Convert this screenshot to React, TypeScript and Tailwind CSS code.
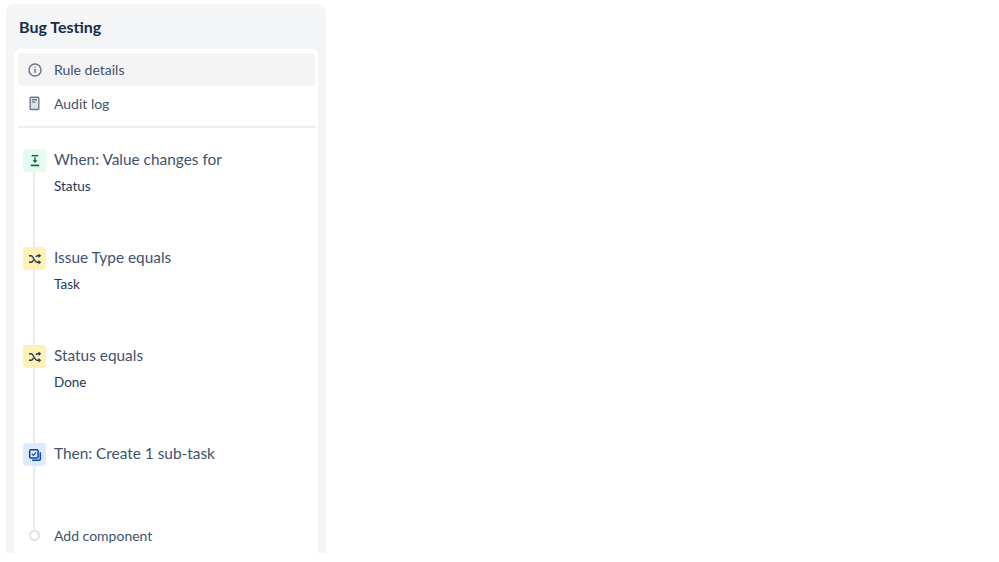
const FONT = "font-['Lato','Noto_Sans',sans-serif]";

function InfoIcon() {
  return (
    <svg width="16" height="16" viewBox="0 0 16 16" fill="none">
      <circle cx="8" cy="8" r="6" stroke="#6b778c" strokeWidth="1.5" />
      <rect x="7.25" y="7" width="1.5" height="4" fill="#6b778c" />
      <rect x="7.25" y="4.6" width="1.5" height="1.5" rx="0.75" fill="#6b778c" />
    </svg>
  );
}

function PageIcon() {
  return (
    <svg width="16" height="16" viewBox="0 0 16 16" fill="none">
      <rect x="3.2" y="1.2" width="8.6" height="12.3" rx="1" stroke="#6b778c" strokeWidth="1.4" fill="#dfe1e6" />
      <rect x="5" y="3" width="5" height="1.4" fill="#6b778c" />
      <rect x="5" y="5.400" width="3.4" height="1.3" fill="#6b778c" />
    </svg>
  );
}

function TriggerIcon() {
  return (
    <svg width="16" height="16" viewBox="0 0 16 16" fill="none">
      <rect x="4.700" y="2" width="6.600" height="1.400" fill="#006644" />
      <rect x="3.800" y="11.600" width="8.400" height="1.600" fill="#006644" />
      <path d="M7.300 4.200h1.400v3h1.800L8 10 5.500 7.200h1.800z" fill="#006644" />
    </svg>
  );
}

function ShuffleIcon() {
  return (
    <svg width="16" height="16" viewBox="0 0 16 16" fill="none">
      <path d="M2 4.800h2.200c2.400 0 3.200 6.400 5.600 6.400H12M2 11.200h2.200c1 0 1.700-1 2.300-2.200M9 6c.3-.7.7-1.200 1.400-1.200H12" stroke="#253858" strokeWidth="1.500" />
      <path d="M11.500 2.600 14.300 4.800 11.500 7zM11.500 9 14.300 11.200 11.500 13.400z" fill="#253858" />
    </svg>
  );
}

function ActionIcon() {
  return (
    <svg width="16" height="16" viewBox="0 0 16 16" fill="none">
      <path d="M13.300 5.200v7.100a1 1 0 0 1-1 1H5.200" stroke="#0747a6" strokeWidth="1.500" />
      <rect x="2.700" y="2.700" width="8.400" height="8.400" rx="1" stroke="#0747a6" strokeWidth="1.500" fill="#deebff" />
      <path d="M4.900 6.900 6.400 8.400 9 5.400" stroke="#0747a6" strokeWidth="1.300" />
    </svg>
  );
}

const STEPS = [
  { title: "When: Value changes for", detail: "Status", height: "h-[98px]", tile: "bg-[#e3fcef]", icon: <TriggerIcon /> },
  { title: "Issue Type equals", detail: "Task", height: "h-[98px]", tile: "bg-[#fff0b3]", icon: <ShuffleIcon /> },
  { title: "Status equals", detail: "Done", height: "h-[98px]", tile: "bg-[#fff0b3]", icon: <ShuffleIcon /> },
  { title: "Then: Create 1 sub-task", detail: "", height: "h-[87px]", tile: "bg-[#deebff]", icon: <ActionIcon /> },
];

export default function App() {
  return (
    <div className={`${FONT} h-[562px] w-[999px] bg-white pt-1 pl-1.5`}>
      <div className="flex h-[549px] w-[320px] flex-col overflow-hidden rounded-t-lg bg-[#f4f5f7] px-2">
        <h1 className="flex h-[45px] shrink-0 items-center pl-[5px] text-[16px] font-bold text-[#172b4d]">Bug Testing</h1>

        <div className="flex-1 rounded-t-md bg-white pt-1 pr-[3px] pl-1">
          <nav className="flex flex-col border-b-2 border-[#ebecf0] pb-[6px]">
            <a className="flex h-[33px] items-center gap-[11px] rounded bg-[#f4f4f5] pl-[9px] text-[14px] text-[#42526e]">
              <InfoIcon />
              Rule details
            </a>
            <a className="mt-[1px] flex h-[33px] items-center gap-[11px] rounded pl-[9px] text-[14px] text-[#42526e]">
              <PageIcon />
              Audit log
            </a>
          </nav>

          <div className="flex flex-col pt-[21px] pl-[5px]">
            {STEPS.map((step) => (
              <div key={step.title} className={`flex gap-2 ${step.height}`}>
                <div className="flex w-[23px] flex-col">
                  <div className={`flex size-[23px] shrink-0 items-center justify-center rounded ${step.tile}`}>{step.icon}</div>
                  <div className="ml-[10px] w-0.5 flex-1 bg-[#ebecf0]" />
                </div>
                <div className="-mt-px flex flex-col text-[#42526e]">
                  <span className="text-[15.4px] leading-[22px]">{step.title}</span>
                  {step.detail && <span className="mt-[6px] text-[13.5px] leading-[20px] text-[#253858]">{step.detail}</span>}
                </div>
              </div>
            ))}
            <div className="flex items-start gap-2">
              <div className="w-[23px] pl-1.5">
                <div className="size-[11px] rounded-full border-2 border-[#dfe1e6] bg-white" />
              </div>
              <span className="text-[14px] leading-[12px] text-[#42526e]">Add component</span>
            </div>
          </div>
        </div>
      </div>
    </div>
  );
}
